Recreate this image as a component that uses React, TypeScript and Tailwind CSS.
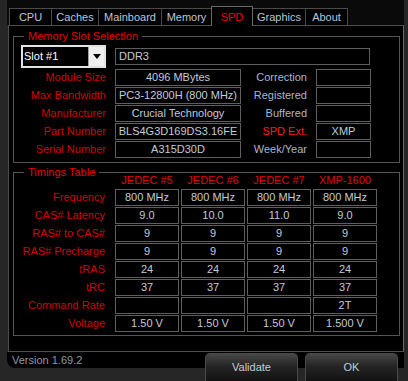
const tabs = [
  { name: "CPU", w: "w-[43px]" },
  { name: "Caches", w: "w-[48px]" },
  { name: "Mainboard", w: "w-[64px]" },
  { name: "Memory", w: "w-[51px]" },
  { name: "SPD", w: "w-[42px]", active: true },
  { name: "Graphics", w: "w-[54px]" },
  { name: "About", w: "w-[43px]" },
];

const memRows = [
  ["Module Size", "4096 MBytes", "Correction", ""],
  ["Max Bandwidth", "PC3-12800H (800 MHz)", "Registered", ""],
  ["Manufacturer", "Crucial Technology", "Buffered", ""],
  ["Part Number", "BLS4G3D169DS3.16FE", "SPD Ext.", "XMP"],
  ["Serial Number", "A315D30D", "Week/Year", ""],
];

const timingHeads = ["JEDEC #5", "JEDEC #6", "JEDEC #7", "XMP-1600"];

const timingRows: [string, string[]][] = [
  ["Frequency", ["800 MHz", "800 MHz", "800 MHz", "800 MHz"]],
  ["CAS# Latency", ["9.0", "10.0", "11.0", "9.0"]],
  ["RAS# to CAS#", ["9", "9", "9", "9"]],
  ["RAS# Precharge", ["9", "9", "9", "9"]],
  ["tRAS", ["24", "24", "24", "24"]],
  ["tRC", ["37", "37", "37", "37"]],
  ["Command Rate", ["", "", "", "2T"]],
  ["Voltage", ["1.50 V", "1.50 V", "1.50 V", "1.500 V"]],
];

const Box = ({ children, className = "" }: { children?: React.ReactNode; className?: string }) => (
  <div className={`flex h-[17px] items-center justify-center border border-[#5e5e5e] leading-none text-[#c2cbda] ${className}`}>
    {children}
  </div>
);

const Group = ({ title, children, className = "" }: { title: string; children: React.ReactNode; className?: string }) => (
  <div className={`relative border border-[#545454] ${className}`}>
    <span className="absolute -top-[8px] left-[10px] bg-black px-[4px] leading-[14px] text-[#e60000]">{title}</span>
    {children}
  </div>
);

export default function App() {
  return (
    <div className="h-[381px] w-[408px] overflow-hidden bg-[#262626] font-['Liberation_Sans',Arial,sans-serif] text-[11px]">
      <div className="ml-[7px] w-[397px] bg-[#0a0a0a]">
        <div className="flex h-[25px] items-end pl-[2px]">
          {tabs.map((t, i) => (
            <div
              key={t.name}
              className={`${t.w} ${i > 0 ? "-ml-px" : ""} flex justify-center border border-b-0 pt-[2px] leading-[13px] ${
                t.active
                  ? "relative z-10 -mb-px h-[20px] border-[#6a6a6a] bg-black pt-[4px] text-[#f00000]"
                  : "h-[17px] border-[#4a4a4a] bg-black text-[#b8c6dc]"
              }`}
            >
              {t.name}
            </div>
          ))}
        </div>
      </div>

      <div className="ml-[8px] h-[327px] w-[396px] border border-[#4d4d4d] border-r-[#6a6a6a] bg-black pl-[4px] pr-[3px] pt-[10px]">
        <Group title="Memory Slot Selection" className="pb-[4px] pt-[8px]">
          <div className="grid grid-cols-[92px_126px_57px_55px] gap-x-[9px] gap-y-[1px]">
            <div className="flex h-[23px] items-stretch">
              <div className="ml-[7px] flex w-[86px] border-2 border-[#e2e2e2] bg-black">
                <span className="flex flex-1 items-center pl-[1px] text-white">Slot #1</span>
                <span className="flex w-[16px] items-center justify-center border-l border-[#a0a0a0] bg-[#efefef]">
                  <svg width="8" height="5" viewBox="0 0 8 5">
                    <path d="M0 0h8L4 5z" fill="#000" />
                  </svg>
                </span>
              </div>
            </div>
            <div className="col-span-3 flex items-center pr-[1px]">
              <Box className="w-full justify-start pl-[3px]">DDR3</Box>
            </div>
            {memRows.map(([l, v, rl, rv]) => (
              <div key={l} className="contents">
                <div className="flex h-[17px] items-center justify-end text-[#d20000]">{l}</div>
                <Box>{v}</Box>
                <div className={`flex h-[17px] items-center justify-end ${rl === "SPD Ext." ? "text-[#ff1a1a]" : "text-[#a9b6cc]"}`}>{rl}</div>
                <Box>{rv}</Box>
              </div>
            ))}
          </div>
        </Group>

        <Group title="Timings Table" className="mt-[9px] pb-[3px]">
          <div className="grid grid-cols-[99px_64px_64px_64px_64px] gap-x-[2px] gap-y-[1px]">
            <div className="h-[15px]" />
            {timingHeads.map((h) => (
              <div key={h} className="flex h-[15px] items-center justify-center text-[#e60000]">
                {h}
              </div>
            ))}
            {timingRows.map(([l, vals]) => (
              <div key={l} className="contents">
                <div className="flex h-[17px] items-center justify-end pr-[8px] text-[#d20000]">{l}</div>
                {vals.map((v, i) => (
                  <Box key={i}>{v}</Box>
                ))}
              </div>
            ))}
          </div>
        </Group>
      </div>

      <div className="ml-[7px] flex h-[29px] w-[397px]">
        <div className="w-[193px]">
          <div className="flex h-[16px] items-center rounded-bl-[8px] bg-black pl-[5px] text-[#8e98a8]">
            Version 1.69.2
          </div>
        </div>
        <div className="flex w-[204px] bg-[linear-gradient(to_bottom,#000_16px,transparent_16px)] pt-[1px]">
          {["Validate", "OK"].map((b, i) => (
            <div
              key={b}
              className={`${i === 0 ? "ml-[5px]" : "ml-[7px]"} flex h-[28px] w-[93px] justify-center rounded-t-[5px] border border-b-0 border-[#4a4a4a] bg-[linear-gradient(to_bottom,#474747,#252525_45%,#121212)] pt-[6px] leading-[14px] text-[#c4ccd8]`}
            >
              {b}
            </div>
          ))}
        </div>
      </div>
    </div>
  );
}
